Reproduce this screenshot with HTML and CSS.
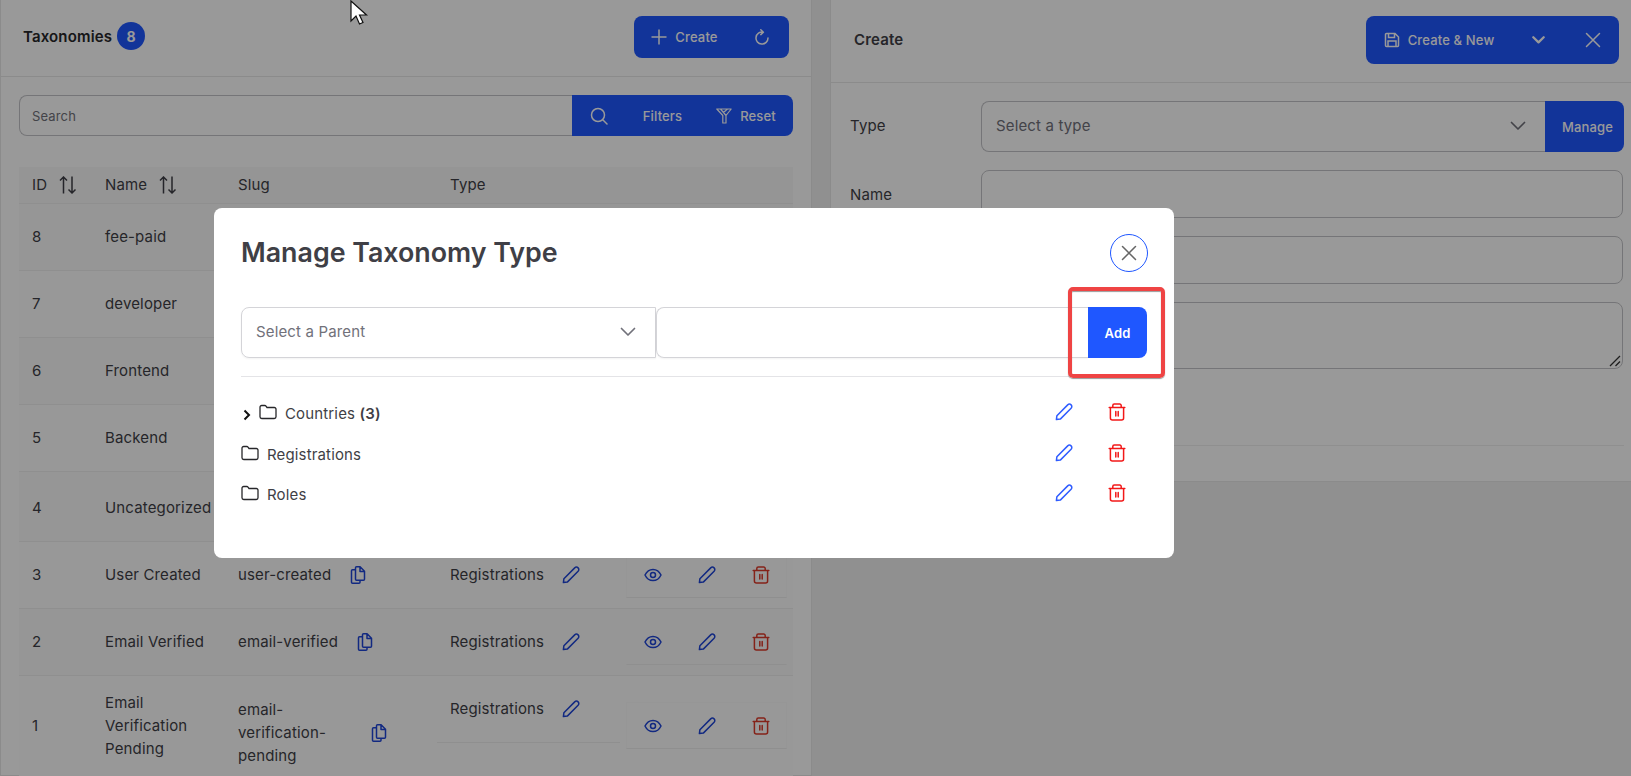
FILE: index.html
```html
<!DOCTYPE html>
<html lang="en">
<head>
<meta charset="UTF-8">
<meta name="viewport" content="width=device-width, initial-scale=1.0">
<title>Manage Taxonomy Type</title>
<link rel="stylesheet" href="styles.css">
</head>
<body>

<svg class="icon-defs" aria-hidden="true">
    <symbol id="i-pencil" viewBox="0 0 18 18"><path d="M1.400 16.600l.5-3.900L12.700 1.900a2.100 2.100 0 0 1 3.400 3.400L5.300 16.100z" fill="none" stroke="currentColor" stroke-width="1.500" stroke-linejoin="round"/></symbol>
    <symbol id="i-trash" viewBox="0 0 18 18"><path d="M1.200 4.500h15.600M4.800 4.500V2.600a1.500 1.500 0 0 1 1.500-1.500h5.400a1.500 1.500 0 0 1 1.500 1.500v1.900M2.400 4.500V15a2 2 0 0 0 2 2h9.200a2 2 0 0 0 2-2V4.500M7.800 8.500v4.500M10.200 8.500v4.500" fill="none" stroke="currentColor" stroke-width="1.500" stroke-linecap="round"/></symbol>
    <symbol id="i-eye" viewBox="0 0 18 18"><path d="M1 9c1.800-3.800 4.500-5.600 8-5.600S15.200 5.200 17 9c-1.800 3.800-4.500 5.600-8 5.600S2.800 12.800 1 9z" fill="none" stroke="currentColor" stroke-width="1.500"/><circle cx="9" cy="9" r="2.500" fill="none" stroke="currentColor" stroke-width="1.500"/></symbol>
    <symbol id="i-copy" viewBox="0 0 18 18"><path d="M7.500.8h3.600l4.400 4.400v8a1 1 0 0 1-1 1H7.500a1 1 0 0 1-1-1v-11.400a1 1 0 0 1 1-1zM11 .8v4.600h4.500M6.500 3.800H3.500a1 1 0 0 0-1 1v11.400a1 1 0 0 0 1 1h6.500a1 1 0 0 0 1-1v-2" fill="none" stroke="currentColor" stroke-width="1.500" stroke-linejoin="round"/></symbol>
    <symbol id="i-folder" viewBox="0 0 18 16"><path d="M1 3.200A1.700 1.700 0 0 1 2.700 1.500h3.100a1.500 1.500 0 0 1 1.200.6l1 1.400h7.300A1.700 1.700 0 0 1 17 5.200v7.600a1.700 1.700 0 0 1-1.700 1.700H2.700A1.700 1.700 0 0 1 1 12.800z" fill="none" stroke="currentColor" stroke-width="1.300"/></symbol>
    <symbol id="i-sort" viewBox="0 0 18 18"><path d="M4.500 17.500V1M1 4.500L4.500 1 8 4.500M13 .5V17M9.500 13.500L13 17l3.500-3.500" fill="none" stroke="currentColor" stroke-width="1.500"/></symbol>
    <symbol id="i-chevron" viewBox="0 0 16 10"><path d="M1.500 1.500L8 8l6.500-6.500" fill="none" stroke="currentColor" stroke-linecap="round" stroke-linejoin="round"/></symbol>
    <symbol id="i-close" viewBox="0 0 16 16"><path d="M1.500 1.500l13 13M14.500 1.500l-13 13" fill="none" stroke="currentColor" stroke-width="1.500" stroke-linecap="round"/></symbol>
</svg>

<div class="page">
    <section class="card card-list">
        <header class="card-head">
            <h2 class="card-title">Taxonomies <span class="badge">8</span></h2>
            <div class="btn-group">
                <button class="btn btn-create">
                    <svg class="ico-16" viewBox="0 0 16 16"><path d="M8 .5v15M.5 8h15" fill="none" stroke="currentColor" stroke-width="1.500"/></svg>
                    Create
                </button>
                <button class="btn btn-refresh">
                    <svg class="ico-16" viewBox="0 0 16 16"><path d="M6.800.8l2.600 2.400-2.600 2.400M9.200 3.200A6 6 0 1 0 14 9" fill="none" stroke="currentColor" stroke-width="1.500" stroke-linecap="round" stroke-linejoin="round"/></svg>
                </button>
            </div>
        </header>

        <div class="search-row">
            <div class="search-input">Search</div>
            <div class="search-btns">
                <button class="btn btn-search">
                    <svg class="ico-18" viewBox="0 0 18 18"><circle cx="8" cy="8" r="6.500" fill="none" stroke="currentColor" stroke-width="1.500"/><path d="M13 13l4 4" stroke="currentColor" stroke-width="1.500" stroke-linecap="round"/></svg>
                </button>
                <button class="btn btn-filters">Filters</button>
                <button class="btn btn-reset">
                    <svg class="ico-16" viewBox="0 0 16 16"><path d="M.8 1h14.400L10 7.500v7.500H6.800V7.500zM4.500 1l5.500 6.500M7.500 4.500L11.500 1" fill="none" stroke="currentColor" stroke-width="1.200" stroke-linejoin="round"/></svg>
                    Reset
                </button>
            </div>
        </div>

        <table class="tax-table">
            <thead>
                <tr>
                    <th class="col-id"><span class="th-in">ID <svg class="ico-18"><use href="#i-sort"/></svg></span></th>
                    <th class="col-name"><span class="th-in">Name <svg class="ico-18"><use href="#i-sort"/></svg></span></th>
                    <th class="col-slug">Slug</th>
                    <th class="col-type">Type</th>
                    <th class="col-act"></th>
                </tr>
            </thead>
            <tbody>
                <tr class="row-std"><td>8</td><td>fee-paid</td><td></td><td></td><td></td></tr>
                <tr class="row-std"><td>7</td><td>developer</td><td></td><td></td><td></td></tr>
                <tr class="row-std"><td>6</td><td>Frontend</td><td></td><td></td><td></td></tr>
                <tr class="row-std"><td>5</td><td>Backend</td><td></td><td></td><td></td></tr>
                <tr class="row-wide"><td>4</td><td>Uncategorized</td><td></td><td></td><td></td></tr>
                <tr class="row-std">
                    <td>3</td>
                    <td>User Created</td>
                    <td><div class="slug">user-created <svg class="ico-18 blue"><use href="#i-copy"/></svg></div></td>
                    <td><div class="type-cell">Registrations <svg class="ico-18 blue"><use href="#i-pencil"/></svg></div></td>
                    <td>
                        <div class="act-box">
                            <svg class="ico-18 blue"><use href="#i-eye"/></svg>
                            <svg class="ico-18 blue"><use href="#i-pencil"/></svg>
                            <svg class="ico-18 red"><use href="#i-trash"/></svg>
                        </div>
                    </td>
                </tr>
                <tr class="row-std">
                    <td>2</td>
                    <td>Email Verified</td>
                    <td><div class="slug">email-verified <svg class="ico-18 blue"><use href="#i-copy"/></svg></div></td>
                    <td><div class="type-cell">Registrations <svg class="ico-18 blue"><use href="#i-pencil"/></svg></div></td>
                    <td>
                        <div class="act-box">
                            <svg class="ico-18 blue"><use href="#i-eye"/></svg>
                            <svg class="ico-18 blue"><use href="#i-pencil"/></svg>
                            <svg class="ico-18 red"><use href="#i-trash"/></svg>
                        </div>
                    </td>
                </tr>
                <tr class="row-last">
                    <td>1</td>
                    <td>Email Verification Pending</td>
                    <td class="slug-low"><div class="slug"><span class="slug-text">email-verification-pending</span> <svg class="ico-18 blue"><use href="#i-copy"/></svg></div></td>
                    <td class="type-top"><div class="type-cell type-line">Registrations <svg class="ico-18 blue"><use href="#i-pencil"/></svg></div></td>
                    <td>
                        <div class="act-box">
                            <svg class="ico-18 blue"><use href="#i-eye"/></svg>
                            <svg class="ico-18 blue"><use href="#i-pencil"/></svg>
                            <svg class="ico-18 red"><use href="#i-trash"/></svg>
                        </div>
                    </td>
                </tr>
            </tbody>
        </table>
    </section>

    <section class="card card-form">
        <header class="card-head card-head-form">
            <h2 class="card-title card-title-form">Create</h2>
            <div class="btn-group btn-group-form">
                <button class="btn btn-save">
                    <svg class="ico-16" viewBox="0 0 16 16"><path d="M1.500 2.500a1 1 0 0 1 1-1h8.500l3.500 3.500v8.500a1 1 0 0 1-1 1h-11a1 1 0 0 1-1-1zM4.500 1.500v4h6v-4M4 14.500v-5.500h8v5.500" fill="none" stroke="currentColor" stroke-width="1.500"/></svg>
                    Create &amp; New
                </button>
                <button class="btn btn-drop"><svg class="ico-chev"><use href="#i-chevron"/></svg></button>
                <button class="btn btn-x"><svg class="ico-16"><use href="#i-close"/></svg></button>
            </div>
        </header>
        <form class="form-body">
            <div class="form-row">
                <label class="form-label form-label-type">Type</label>
                <div class="type-select">
                    <span>Select a type</span>
                    <svg class="ico-chev"><use href="#i-chevron"/></svg>
                </div>
                <button class="btn btn-manage" type="button">Manage</button>
            </div>
            <div class="form-row form-row-gap">
                <label class="form-label">Name</label>
                <div class="field"></div>
            </div>
            <div class="form-row form-row-gap">
                <div class="form-label"></div>
                <div class="field"></div>
            </div>
            <div class="form-row form-row-gap">
                <div class="form-label"></div>
                <div class="field field-area">
                    <svg class="grip" viewBox="0 0 12 12"><path d="M1 11L11 1M6.500 11L11 6.500" stroke="#333" stroke-width="1.300"/></svg>
                </div>
            </div>
            <div class="form-spacer"></div>
        </form>
    </section>
</div>

<div class="overlay">
    <div class="modal">
        <div class="modal-head">
            <h1 class="modal-title">Manage Taxonomy Type</h1>
            <button class="modal-close"><svg class="ico-16"><use href="#i-close"/></svg></button>
        </div>
        <div class="add-row">
            <div class="parent-select">
                <span>Select a Parent</span>
                <svg class="ico-chev"><use href="#i-chevron"/></svg>
            </div>
            <div class="add-input"></div>
            <button class="add-btn">Add</button>
            <div class="highlight"></div>
        </div>
        <ul class="tree">
            <li class="tree-item tree-item-first">
                <span class="tree-label tree-label-sub">
                    <svg class="tree-caret" viewBox="0 0 8 12"><path d="M1.500 1.500L6 6l-4.500 4.500" fill="none" stroke="#111" stroke-width="2"/></svg>
                    <svg class="ico-folder"><use href="#i-folder"/></svg>
                    <span>Countries <b>(3)</b></span>
                </span>
                <span class="tree-acts">
                    <svg class="ico-18 blue-hi"><use href="#i-pencil"/></svg>
                    <svg class="ico-18 red-hi"><use href="#i-trash"/></svg>
                </span>
            </li>
            <li class="tree-item">
                <span class="tree-label">
                    <svg class="ico-folder"><use href="#i-folder"/></svg>
                    <span>Registrations</span>
                </span>
                <span class="tree-acts">
                    <svg class="ico-18 blue-hi"><use href="#i-pencil"/></svg>
                    <svg class="ico-18 red-hi"><use href="#i-trash"/></svg>
                </span>
            </li>
            <li class="tree-item">
                <span class="tree-label">
                    <svg class="ico-folder"><use href="#i-folder"/></svg>
                    <span>Roles</span>
                </span>
                <span class="tree-acts">
                    <svg class="ico-18 blue-hi"><use href="#i-pencil"/></svg>
                    <svg class="ico-18 red-hi"><use href="#i-trash"/></svg>
                </span>
            </li>
        </ul>
    </div>
</div>

<svg class="cursor" viewBox="0 0 20 26"><path d="M1 1v20l5-5 3.500 8 3.500-1.500-3.500-7.500H16.500z" fill="#fff" stroke="#111" stroke-width="1.200"/></svg>

</body>
</html>
```

FILE: styles.css
```css
* {
    box-sizing: border-box;
}

html, body {
    height: 100%;
}

body {
    margin: 0;
    font-family: Inter, "Liberation Sans", sans-serif;
    font-size: 15px;
    letter-spacing: 0.15px;
    color: #3f3f46;
    background-color: #f1f1f1;
    overflow: hidden;
}

.icon-defs {
    display: none;
}

button {
    font-family: inherit;
    border: none;
    cursor: pointer;
}

.page {
    display: flex;
    gap: 18px;
    align-items: flex-start;
    height: 776px;
}

.card {
    background-color: #fff;
    border: 1px solid #e8e8e8;
    border-top: none;
}

.card-list {
    width: 812px;
    height: 776px;
}

.card-form {
    flex: 1;
    height: 482px;
    border-right: none;
}

.card-head {
    display: flex;
    align-items: center;
    justify-content: space-between;
    height: 77px;
    padding: 16px 22px 18px;
    border-bottom: 1px solid #e8e8e8;
}

.card-title {
    display: flex;
    align-items: center;
    gap: 5px;
    margin: 0 0 2px;
    font-size: 15px;
    font-weight: 600;
    color: #27272a;
}

.badge {
    display: flex;
    align-items: center;
    justify-content: center;
    width: 28px;
    height: 28px;
    border-radius: 50%;
    background-color: #1f57ff;
    color: #fff;
    font-size: 14px;
    font-weight: 700;
}

.btn-group {
    display: flex;
    height: 42px;
    border-radius: 8px;
    overflow: hidden;
}

.btn {
    display: flex;
    align-items: center;
    justify-content: center;
    gap: 8px;
    background-color: #1f57ff;
    color: #fff;
    font-size: 13px;
    font-weight: 500;
    letter-spacing: 0.15px;
}

.btn-create {
    width: 101px;
}

.btn-refresh {
    width: 54px;
}

.ico-16 {
    width: 16px;
    height: 16px;
    flex: none;
}

.ico-18 {
    width: 18px;
    height: 18px;
    flex: none;
}

.ico-chev {
    width: 16px;
    height: 10px;
    flex: none;
    stroke-width: 1.7;
}

.blue {
    color: #1f45d8;
}

.red {
    color: #dd3a2a;
}

.blue-hi {
    color: #2f5cff;
}

.red-hi {
    color: #f21818;
}

.search-row {
    display: flex;
    height: 41px;
    margin: 18px 18px 31px;
}

.search-input {
    flex: 1;
    display: flex;
    align-items: center;
    padding-left: 12px;
    border: 1px solid #c4c4c8;
    border-right: none;
    border-radius: 8px 0 0 8px;
    font-size: 13px;
    color: #71717a;
}

.search-btns {
    display: flex;
    width: 221px;
    border-radius: 0 8px 8px 0;
    overflow: hidden;
}

.btn-search {
    width: 54px;
}

.btn-filters {
    width: 71px;
    padding-left: 8px;
}

.btn-reset {
    flex: 1;
    padding-left: 8px;
}

.tax-table {
    width: 774px;
    margin-left: 18px;
    border-collapse: collapse;
    table-layout: fixed;
}

.tax-table th {
    height: 36px;
    padding: 0 13px;
    background-color: #f9f9f9;
    border-bottom: 1px solid #efefef;
    font-weight: 400;
    text-align: left;
}

.col-id {
    width: 73px;
}

.col-name {
    width: 133px;
}

.col-slug {
    width: 212px;
}

.col-type {
    width: 183px;
}

.th-in {
    display: flex;
    align-items: center;
    gap: 12px;
}

.tax-table td {
    padding: 0 13px;
    line-height: 23px;
    border-bottom: 1px solid #efefef;
}

.tax-table tbody tr:nth-child(even) {
    background-color: #fefefe;
}

.tax-table tbody tr:nth-child(odd) {
    background-color: #fafafa;
}

.row-std {
    height: 67px;
}

.row-wide {
    height: 70px;
}

.tax-table .row-wide td {
    padding-top: 3px;
}

.row-last {
    height: 101px;
}

.slug {
    display: flex;
    align-items: center;
    gap: 18px;
}

.slug-text {
    max-width: 114px;
}

.tax-table td.slug-low {
    padding-top: 14px;
}

.type-cell {
    display: flex;
    align-items: center;
    gap: 18px;
}

.tax-table td.type-top {
    vertical-align: top;
    padding: 0;
}

.type-line {
    height: 67px;
    padding-left: 13px;
    border-bottom: 1px solid #efefef;
}

.act-box {
    display: flex;
    align-items: center;
    justify-content: space-between;
    width: 161px;
    height: 47px;
    margin-left: -7px;
    padding: 0 16px 0 17px;
    border: 1px solid #fafafa;
    border-bottom-color: #efefef;
}

.form-body {
    display: flex;
    flex-direction: column;
    padding: 18px 7px 0 19px;
}

.card-head-form {
    height: 83px;
    padding: 16px 12px 18px 23px;
}

.card-title-form {
    font-weight: 600;
    color: #3f3f46;
}

.btn-group-form {
    height: 48px;
}

.btn-save {
    width: 144px;
    padding-left: 8px;
}

.btn-drop {
    width: 57px;
}

.btn-drop .ico-chev {
    width: 13px;
    height: 8px;
    stroke-width: 2.800;
}

.btn-x {
    width: 52px;
}

.form-row {
    display: flex;
    align-items: center;
}

.form-row-gap {
    margin-top: 18px;
}

.form-label {
    width: 131px;
    flex: none;
}

.form-label-type {
    padding-bottom: 2px;
}

.type-select {
    flex: 1;
    display: flex;
    align-items: center;
    justify-content: space-between;
    height: 51px;
    padding: 0 19px 2px 14px;
    border: 1px solid #c4c4c8;
    border-right: none;
    border-radius: 8px 0 0 8px;
    color: #71717a;
}

.btn-manage {
    width: 79px;
    height: 51px;
    padding-left: 12px;
    border-radius: 0 8px 8px 0;
    font-size: 13px;
}

.field {
    flex: 1;
    height: 48px;
    margin-right: 1px;
    border: 1px solid #c4c4c8;
    border-radius: 8px;
}

.field-area {
    position: relative;
    height: 67px;
}

.grip {
    position: absolute;
    right: 1px;
    bottom: 1px;
    width: 12px;
    height: 12px;
}

.form-spacer {
    height: 77px;
    border-bottom: 1px solid #efefef;
}

.overlay {
    position: fixed;
    inset: 0;
    padding: 208px 0 0 214px;
    background-color: rgba(0, 0, 0, 0.4);
}

.modal {
    width: 960px;
    height: 350px;
    padding: 26px 27px;
    background-color: #fff;
    border-radius: 8px;
}

.modal-head {
    display: flex;
    align-items: center;
    justify-content: space-between;
    height: 38px;
}

.modal-title {
    margin: 0 0 2px;
    font-size: 26.800px;
    font-weight: 600;
    letter-spacing: 0;
    color: #3f3f46;
}

.modal-close {
    display: flex;
    align-items: center;
    justify-content: center;
    width: 38px;
    height: 38px;
    margin-right: -1px;
    padding: 0;
    border: 1px solid #1f57ff;
    border-radius: 50%;
    background: none;
    color: #666;
}

.add-row {
    position: relative;
    display: flex;
    height: 70px;
    margin-top: 35px;
    padding-bottom: 18px;
    border-bottom: 1px solid #e4e4e7;
}

.parent-select {
    display: flex;
    align-items: center;
    justify-content: space-between;
    width: 415px;
    padding: 0 19px 2px 14px;
    border: 1px solid #d4d4d8;
    border-radius: 8px 0 0 8px;
    box-shadow: 0 1px 2px rgba(0, 0, 0, 0.05);
    color: #71717a;
}

.add-input {
    flex: 1;
    border: 1px solid #d4d4d8;
    border-right: none;
    border-radius: 8px 0 0 8px;
    box-shadow: 0 1px 2px rgba(0, 0, 0, 0.05);
}

.add-btn {
    width: 59px;
    border-radius: 0 8px 8px 0;
    background-color: #1f57ff;
    color: #fff;
    font-size: 13px;
    font-weight: 600;
    letter-spacing: 0.15px;
}

.highlight {
    position: absolute;
    left: 827px;
    top: -20px;
    width: 97px;
    height: 91px;
    border: 4px solid #ef4444;
    border-radius: 5px;
    box-shadow: 0 1px 1px rgba(0, 0, 0, 0.4), inset 0 1px 1px rgba(0, 0, 0, 0.4);
}

.tree {
    margin: 0;
    padding: 14px 0 0;
    list-style: none;
}

.tree-item {
    display: flex;
    align-items: center;
    justify-content: space-between;
    height: 39.500px;
}

.tree-item-first {
    height: 44px;
}

.tree-label {
    display: flex;
    align-items: center;
    gap: 8px;
}

.tree-label b {
    font-weight: 600;
}

.tree-caret {
    width: 8px;
    height: 12px;
    margin: 4px 1px 0 2px;
}

.ico-folder {
    width: 18px;
    height: 16px;
    margin-bottom: 3px;
    color: #27272a;
}

.tree-label-sub .ico-folder {
    margin-left: -1px;
}

.tree-acts {
    display: flex;
    gap: 35px;
    padding: 0 21px 3px 0;
}

.cursor {
    position: fixed;
    left: 350px;
    top: 0;
    width: 20px;
    height: 26px;
}
```
